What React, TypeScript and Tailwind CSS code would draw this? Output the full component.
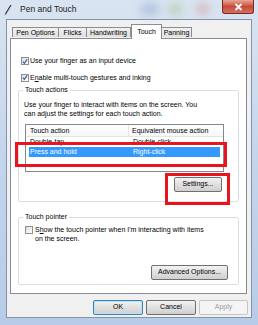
import React from 'react';

const font = { fontFamily: '"Liberation Sans", Arial, sans-serif' };

const Check = ({ checked }: { checked?: boolean }) => (
    <div className="flex h-[8px] w-[8px] shrink-0 items-center justify-center border border-[#8f8f8f] bg-gradient-to-br from-[#dcdcdc] to-[#ffffff]">
        {checked && (
            <svg width="7" height="7" viewBox="0 0 7 7">
                <path d="M1 3.6 L2.8 5.6 L6 1" fill="none" stroke="#3a5a9c" strokeWidth="1.4" />
            </svg>
        )}
    </div>
);

const Button = ({ label, className, disabled, focused }: { label: string; className: string; disabled?: boolean; focused?: boolean }) => (
    <div
        className={`flex items-center justify-center rounded-[2px] border text-[7px] ${
            disabled
                ? 'border-[#c5c5c5] bg-[#f4f4f4] text-[#a0a0a0]'
                : focused
                  ? 'border-[#3c7fb1] bg-gradient-to-b from-[#f2f2f2] to-[#cfcfcf] text-black shadow-[inset_0_0_0_1px_#b8e3f8]'
                  : 'border-[#707070] bg-gradient-to-b from-[#f2f2f2] to-[#cfcfcf] text-black'
        } ${className}`}
    >
        {label}
    </div>
);

const Tab = ({ label, w, selected }: { label: string; w: string; selected?: boolean }) => (
    <div
        className={`flex items-start justify-center border border-b-0 border-[#898c95] px-[2px] text-[7px] ${w} ${
            selected ? 'relative z-10 -mb-px h-[15px] bg-white pt-[2px]' : 'mt-[3px] h-[10px] -ml-px bg-gradient-to-b from-[#f2f2f2] to-[#e0e0e0] first:ml-0'
        }`}
    >
        {label}
    </div>
);

export default function App() {
    return (
        <div className="relative h-[325px] w-[258px] overflow-hidden bg-gradient-to-b from-[#d9e4f1] via-[#c3d5eb] to-[#b7cce6] text-black" style={font}>
            <div className="absolute left-[140px] top-[2px] h-[14px] w-[20px] rounded-full bg-[#9fb6d8] opacity-60 blur-[4px]" />
            <div className="absolute left-[168px] top-[3px] h-[12px] w-[14px] rounded-full bg-[#a9c79a] opacity-60 blur-[4px]" />
            <div className="absolute left-[196px] top-[3px] h-[12px] w-[14px] rounded-full bg-[#d7a3a3] opacity-60 blur-[4px]" />

            {/* title bar */}
            <div className="relative flex h-[19px] items-center">
                <svg className="ml-[4px]" width="8" height="12" viewBox="0 0 8 12">
                    <path d="M7 1 L1.5 10" stroke="#3b3b3b" strokeWidth="1.3" />
                    <path d="M1.5 10 L1 11.3" stroke="#888" strokeWidth="1" />
                </svg>
                <span className="ml-[8px] text-[8.5px] text-[#1e1e1e]">Pen and Touch</span>
                <div className="ml-auto mr-[4px] flex h-[14px] w-[32px] items-center justify-center self-start rounded-b-[3px] border border-t-0 border-[#7a2a22] bg-gradient-to-b from-[#e6a596] via-[#c8493a] to-[#d2705f]">
                    <svg width="9" height="8" viewBox="0 0 9 8">
                        <path d="M1.5 1 L7.5 7 M7.5 1 L1.5 7" stroke="#fff" strokeWidth="1.8" />
                    </svg>
                </div>
            </div>

            {/* client */}
            <div className="mx-[6px] flex h-[299px] flex-col border border-[#8293ab] bg-[#f0f0f0]">
                <div className="ml-[5px] flex pt-[4px]">
                    <Tab label="Pen Options" w="w-[47px]" />
                    <Tab label="Flicks" w="w-[29px]" />
                    <Tab label="Handwriting" w="w-[45px]" />
                    <Tab label="Touch" w="w-[31px]" selected />
                    <Tab label="Panning" w="w-[31px]" />
                </div>

                <div className="ml-[3px] h-[256px] w-[237px] border border-[#898c95] bg-white">
                    <div className="ml-[10px] mt-[17px] flex items-center gap-[1px] text-[7px]">
                        <Check checked />
                        <span>Use your finger as an input device</span>
                    </div>
                    <div className="ml-[10px] mt-[6px] flex items-center gap-[1px] text-[7px]">
                        <Check checked />
                        <span>
                            E<span className="underline">n</span>able multi-touch gestures and inking
                        </span>
                    </div>

                    <fieldset className="ml-[7px] mt-[2px] h-[117px] w-[221px] rounded-[2px] border border-[#d5dfe5]">
                        <legend className="ml-[4px] px-[2px] text-[7px]">Touch actions</legend>
                        <p className="ml-[5px] mt-[4px] text-[7px] leading-[9px]">
                            Use your finger to interact with items on the screen. You
                            <br />
                            can adjust the settings for each touch action.
                        </p>
                        <div className="ml-[6px] mt-[6px] h-[48px] w-[199px] border border-[#828790] text-[7px]">
                            <div className="flex h-[12px] border-b border-[#e5e5e5] bg-gradient-to-b from-white to-[#f6f7f8]">
                                <div className="w-[103px] border-r border-[#e5e5e5] pl-[4px] leading-[12px]">Touch action</div>
                                <div className="pl-[3px] leading-[12px]">Equivalent mouse action</div>
                            </div>
                            <div className="flex h-[10px] leading-[10px]">
                                <div className="w-[103px] pl-[4px]">Double-tap</div>
                                <div className="pl-[4px]">Double-click</div>
                            </div>
                            <div className="mx-[3px] flex h-[10px] bg-[#3399ff] leading-[10px] text-white">
                                <div className="w-[100px] pl-[1px]">Press and hold</div>
                                <div className="pl-[4px]">Right-click</div>
                            </div>
                        </div>
                        <div className="mr-[16px] mt-[5px] flex justify-end">
                            <Button label="Settings..." className="h-[15px] w-[48px]" />
                        </div>
                    </fieldset>

                    <fieldset className="ml-[7px] mt-[10px] h-[73px] w-[221px] rounded-[2px] border border-[#d5dfe5]">
                        <legend className="ml-[4px] px-[2px] text-[7px]">Touch pointer</legend>
                        <div className="ml-[6px] mt-[2px] flex items-start gap-[2px] text-[7px] leading-[9px]">
                            <div className="mt-[1px]">
                                <Check />
                            </div>
                            <span>
                                S<span className="underline">h</span>ow the touch pointer when I'm interacting with items
                                <br />
                                on the screen.
                            </span>
                        </div>
                        <div className="mr-[10px] mt-[22px] flex justify-end">
                            <Button label="Advanced Options..." className="h-[15px] w-[77px]" />
                        </div>
                    </fieldset>
                </div>

                <div className="mr-[3px] mt-[6px] flex justify-end gap-[3px]">
                    <Button label="OK" className="h-[15px] w-[50px]" focused />
                    <Button label="Cancel" className="h-[15px] w-[50px]" />
                    <Button label="Apply" className="h-[15px] w-[49px]" disabled />
                </div>
            </div>

            {/* red highlight boxes */}
            <div className="absolute left-[15px] top-[142px] h-[25px] w-[212px] border-[3px] border-[#e8141e]" />
            <div className="absolute left-[165px] top-[173px] h-[32px] w-[65px] border-[3px] border-[#e8141e]" />
        </div>
    );
}
